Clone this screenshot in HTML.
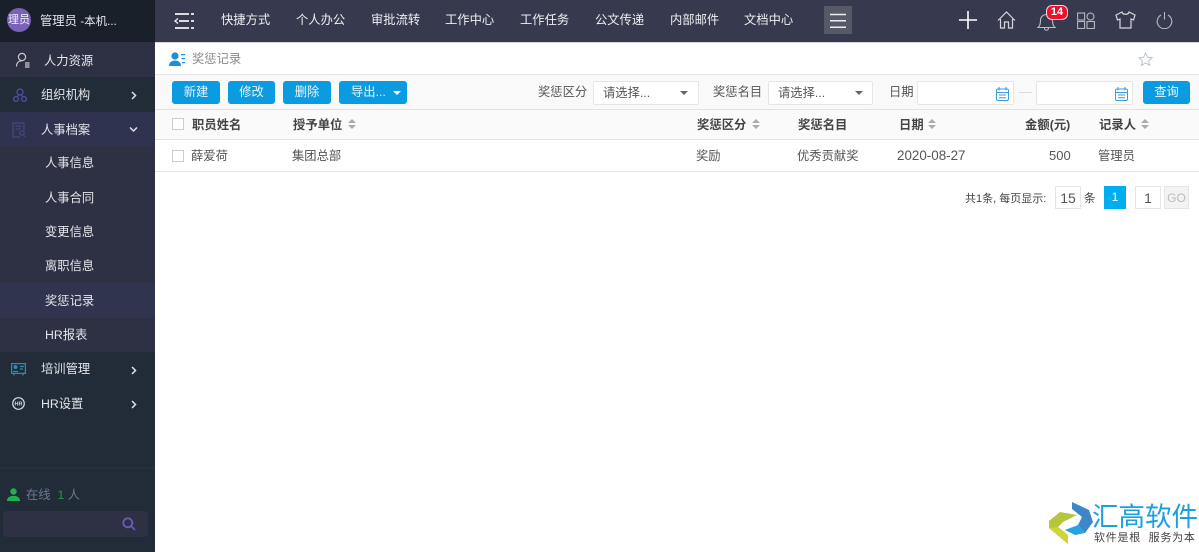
<!DOCTYPE html>
<html><head><meta charset="utf-8">
<style>
*{box-sizing:border-box;margin:0;padding:0}
html,body{width:1199px;height:552px;overflow:hidden;background:#fff}
body{position:relative;font-family:"Liberation Sans","Noto Sans CJK SC",sans-serif;font-size:12.3px;color:#444}
.a{position:absolute}
.t{position:absolute;white-space:nowrap;line-height:16px}
.side{color:#e3e6ea;font-size:12.3px}
.nav{color:#eef0f3;font-size:12.3px;top:12px}
.btn{position:absolute;top:81px;height:23px;background:#0a9be0;border-radius:3px;color:#eaf6fd;text-align:center;line-height:23px;font-size:12.3px}
.sel{position:absolute;top:81px;height:24px;background:#fff;border:1px solid #e6e6e6;border-radius:2px;color:#555;line-height:22px;padding-left:9px}
.th{font-weight:bold;color:#444;top:117px;letter-spacing:.05px}
.td{color:#555;top:148px}
.tri{position:absolute;width:0;height:0;border-left:4px solid transparent;border-right:4px solid transparent;border-top:4px solid #666}
.sort{position:absolute;top:119px;width:8px;height:12px}
.sort:before{content:"";position:absolute;left:0;top:0;border-left:4px solid transparent;border-right:4px solid transparent;border-bottom:4px solid #aaa}
.sort:after{content:"";position:absolute;left:0;top:6px;border-left:4px solid transparent;border-right:4px solid transparent;border-top:4px solid #aaa}
.cb{position:absolute;left:172px;width:12px;height:12px;border:1px solid #ccc;background:#fff}
.arr{position:absolute;left:130px}
</style></head><body>

<!-- sidebar -->
<div class="a" style="left:0;top:0;width:155px;height:552px;background:#222b38"></div>
<div class="a" style="left:0;top:0;width:155px;height:42px;background:#1a202a"></div>
<div class="a" style="left:0;top:42px;width:155px;height:35px;background:#2e3044"></div>
<div class="a" style="left:0;top:112px;width:155px;height:34px;background:#303350"></div>
<div class="a" style="left:0;top:146px;width:155px;height:206px;background:#2e3044"></div>
<div class="a" style="left:0;top:283px;width:155px;height:35px;background:#30344f"></div>
<div class="a" style="left:0;top:467px;width:155px;height:2px;background:#2a2f40"></div>

<div class="a" style="left:7px;top:8px;width:24px;height:24px;border-radius:50%;background:#7a62b8;color:#f2f0fa;font-size:11px;line-height:24px;text-align:center;white-space:nowrap">理员</div>
<div class="t side" style="left:40px;top:13px">管理员 <span style="font-size:11.5px">-本机...</span></div>

<svg class="a" style="left:15px;top:52px" width="16" height="17" viewBox="0 0 16 17" fill="none" stroke="#c9ccd2" stroke-width="1.2"><circle cx="7" cy="5" r="3.6"/><path d="M1.5 14.500c0-3.500 2-5.500 5-5.700M10 11h4.500M10 13h4.500M10 15h4.500"/></svg>
<div class="t side" style="left:44px;top:53px">人力资源</div>

<svg class="a" style="left:12px;top:87px" width="16" height="16" viewBox="0 0 16 16" fill="none" stroke="#4f4a9c" stroke-width="1.4"><circle cx="8" cy="5" r="3"/><circle cx="4" cy="12" r="2.400"/><circle cx="12" cy="12" r="2.400"/><path d="M6.500 8 5 10M9.500 8 11 10"/></svg>
<div class="t side" style="left:41px;top:87px">组织机构</div>
<svg class="arr" style="top:91px" width="8" height="9" viewBox="0 0 8 9" fill="none" stroke="#dfe2e6" stroke-width="1.500"><path d="M2 1l3.500 3.500L2 8"/></svg>

<svg class="a" style="left:12px;top:122px" width="14" height="16" viewBox="0 0 14 16" fill="none" stroke="#47457f" stroke-width="1.2"><path d="M12 8V1H1v14h7M3.500 4h6M3.500 7h5"/><circle cx="10" cy="11" r="2.200"/><path d="M11.500 13l1.500 2"/></svg>
<div class="t side" style="left:41px;top:122px">人事档案</div>
<svg class="arr" style="top:126px;left:129px" width="9" height="7" viewBox="0 0 9 7" fill="none" stroke="#dfe2e6" stroke-width="1.500"><path d="M1 1.500l3.500 3.500L8 1.500"/></svg>

<div class="t side" style="left:45px;top:155px">人事信息</div>
<div class="t side" style="left:45px;top:190px">人事合同</div>
<div class="t side" style="left:45px;top:224px">变更信息</div>
<div class="t side" style="left:45px;top:258px">离职信息</div>
<div class="t side" style="left:45px;top:293px">奖惩记录</div>
<div class="t side" style="left:45px;top:327px">HR报表</div>

<svg class="a" style="left:11px;top:363px" width="15" height="13" viewBox="0 0 15 13" fill="none" stroke="#2b8fb5" stroke-width="1.200"><rect x=".6" y=".6" width="13.800" height="9.800"/><circle cx="4.500" cy="4" r="1.400" fill="#2b8fb5"/><path d="M2 8.500h5M9 3.500h4M9 6h3M3 10.500v2M12 10.500v2"/></svg>
<div class="t side" style="left:41px;top:361px">培训管理</div>
<svg class="arr" style="top:366px" width="8" height="9" viewBox="0 0 8 9" fill="none" stroke="#dfe2e6" stroke-width="1.500"><path d="M2 1l3.500 3.500L2 8"/></svg>

<svg class="a" style="left:12px;top:397px" width="13" height="13" viewBox="0 0 13 13" fill="none"><circle cx="6.500" cy="6.500" r="5.800" stroke="#d8dbe0" stroke-width="1.200"/><text x="6.500" y="8.500" font-size="5.500" font-weight="bold" text-anchor="middle" fill="#d8dbe0" font-family="Liberation Sans,sans-serif">HR</text></svg>
<div class="t side" style="left:41px;top:396px">HR设置</div>
<svg class="arr" style="top:400px" width="8" height="9" viewBox="0 0 8 9" fill="none" stroke="#dfe2e6" stroke-width="1.500"><path d="M2 1l3.500 3.500L2 8"/></svg>

<svg class="a" style="left:7px;top:488px" width="13" height="13" viewBox="0 0 13 13" fill="#1fb14a"><circle cx="6.500" cy="3.500" r="3.200"/><path d="M0 13c0-3 2-4.500 4.500-5h4c2.500.5 4.500 2 4.500 5z"/></svg>
<div class="t" style="left:26px;top:487px;color:#6c7a8c">在线&nbsp; <span style="color:#1e9c42">1</span> 人</div>
<div class="a" style="left:3px;top:511px;width:145px;height:26px;background:#2e3044;border-radius:4px"></div>
<svg class="a" style="left:122px;top:517px" width="14" height="14" viewBox="0 0 14 14" fill="none" stroke="#6a5cb5" stroke-width="1.800"><circle cx="5.800" cy="5.800" r="4.500"/><path d="M9 9l4 4"/></svg>

<!-- top bar -->
<div class="a" style="left:155px;top:0;width:1044px;height:42px;background:#373a4f"></div>
<div class="a" style="left:155px;top:42px;width:1044px;height:1px;background:#d8d8dc"></div>
<svg class="a" style="left:173px;top:12px" width="22" height="18" viewBox="0 0 22 18" fill="none" stroke="#f2f3f5" stroke-width="1.800"><path d="M2 2h14M18 2h3M6 9h10M18 9h3M2 16h14M18 16h3"/><path d="M5 6.500 2 9l3 2.500" stroke-width="1.300"/></svg>

<div class="t nav" style="left:221px">快捷方式</div>
<div class="t nav" style="left:296px">个人办公</div>
<div class="t nav" style="left:371px">审批流转</div>
<div class="t nav" style="left:445px">工作中心</div>
<div class="t nav" style="left:520px">工作任务</div>
<div class="t nav" style="left:595px">公文传递</div>
<div class="t nav" style="left:670px">内部邮件</div>
<div class="t nav" style="left:744px">文档中心</div>

<div class="a" style="left:824px;top:6px;width:28px;height:28px;background:#565968"></div>
<svg class="a" style="left:829px;top:13px" width="18" height="16" viewBox="0 0 18 16" stroke="#eceef0" stroke-width="1.500"><path d="M1 1.500h16M1 7.800h16M1 14.200h16"/></svg>

<svg class="a" style="left:959px;top:11px" width="18" height="18" viewBox="0 0 18 18" stroke="#fff" stroke-width="1.600"><path d="M9 0v18M0 9h18"/></svg>
<svg class="a" style="left:997px;top:11px" width="19" height="18" viewBox="0 0 19 18" fill="none" stroke="#d5d7dc" stroke-width="1.200"><path d="M1 9.500 9.500 1 18 9.500M3.500 8v9h4v-6h4v6h4V8"/></svg>
<svg class="a" style="left:1037px;top:11px" width="19" height="20" viewBox="0 0 19 20" fill="none" stroke="#b9bcc4" stroke-width="1.100"><path d="M1 16.500c2-1.500 2.500-4 2.500-7 0-3.500 2.500-6 6-6s6 2.500 6 6c0 3 .5 5.500 2.500 7zM7.500 17c0 3 4 3 4 0"/></svg>
<div class="a" style="left:1046px;top:5px;width:22px;height:15px;background:#f0102c;border:1px solid #f3d5d8;border-radius:6px;color:#fff;font-size:11px;font-weight:bold;line-height:13px;text-align:center">14</div>
<svg class="a" style="left:1077px;top:12px" width="18" height="17" viewBox="0 0 18 17" fill="none" stroke="#b4b7bf" stroke-width="1.100"><rect x=".6" y="1" width="7" height="7"/><circle cx="13.500" cy="4.500" r="3.500"/><rect x=".6" y="9.500" width="7" height="7"/><rect x="10" y="9.500" width="7.400" height="7"/></svg>
<svg class="a" style="left:1115px;top:11px" width="21" height="18" viewBox="0 0 21 18" fill="none" stroke="#d5d7dc" stroke-width="1.200"><path d="M7 1 1 4l1.500 5L5 8v9h11V8l2.500 1L20 4l-6-3c-.5 3-6.500 3-7 0z"/></svg>
<svg class="a" style="left:1156px;top:12px" width="17" height="17" viewBox="0 0 17 17" fill="none" stroke="#b4b7bf" stroke-width="1.100"><path d="M5 3a7.300 7.300 0 1 0 7 0M8.500 0v7.500"/></svg>

<!-- breadcrumb -->
<svg class="a" style="left:169px;top:52px" width="16" height="14" viewBox="0 0 16 14" fill="#1d8fd8"><circle cx="6" cy="4" r="3.600"/><path d="M0 14c0-3.500 2.500-5.500 6-5.500S12 10.500 12 14z"/><path d="M12 2h4v1.200h-4zM12.500 6H16v1.200h-3.500zM13 10h3v1.200h-3z"/></svg>
<div class="t" style="left:192px;top:51px;color:#8a8a8a">奖惩记录</div>
<svg class="a" style="left:1138px;top:52px" width="15" height="15" viewBox="0 0 15 15" fill="none" stroke="#b9c2d0" stroke-width="1"><path d="M7.500 1l1.900 4.200 4.600.5-3.400 3.100.9 4.500-4-2.300-4 2.300.9-4.500L1 5.700l4.600-.5z"/></svg>

<!-- toolbar -->
<div class="a" style="left:155px;top:74px;width:1044px;height:36px;background:#f9f9f9;border-top:1px solid #e6e6e6;border-bottom:1px solid #e2e2e2"></div>
<div class="btn" style="left:172px;width:48px">新建</div>
<div class="btn" style="left:228px;width:47px">修改</div>
<div class="btn" style="left:283px;width:48px">删除</div>
<div class="btn" style="left:339px;width:68px;text-align:left;padding-left:12px">导出...</div>
<div class="tri" style="left:393px;top:91px;border-top-color:#fff"></div>

<div class="t" style="left:538px;top:84px;color:#555">奖惩区分</div>
<div class="sel" style="left:593px;width:106px">请选择...</div>
<div class="tri" style="left:680px;top:91px"></div>
<div class="t" style="left:713px;top:84px;color:#555">奖惩名目</div>
<div class="sel" style="left:768px;width:105px">请选择...</div>
<div class="tri" style="left:855px;top:91px"></div>
<div class="t" style="left:889px;top:84px;color:#555">日期</div>
<div class="sel" style="left:917px;width:97px"></div>
<svg class="a" style="left:996px;top:87px" width="13" height="14" viewBox="0 0 13 14" fill="none" stroke="#3d9ad8" stroke-width="1"><rect x=".5" y="2" width="12" height="11.500" rx="1.500"/><path d="M3 0v3.500M10 0v3.500M.5 5.500h12M3 8h7M3 10.800h7"/></svg>
<div class="a" style="left:1019px;top:92px;width:13px;height:1px;background:#ddd"></div>
<div class="sel" style="left:1036px;width:97px"></div>
<svg class="a" style="left:1115px;top:87px" width="13" height="14" viewBox="0 0 13 14" fill="none" stroke="#3d9ad8" stroke-width="1"><rect x=".5" y="2" width="12" height="11.500" rx="1.500"/><path d="M3 0v3.500M10 0v3.500M.5 5.500h12M3 8h7M3 10.800h7"/></svg>
<div class="btn" style="left:1143px;width:47px">查询</div>

<!-- table -->
<div class="a" style="left:155px;top:110px;width:1044px;height:30px;background:#fafafa;border-bottom:1px solid #e2e2e2"></div>
<div class="a" style="left:155px;top:171px;width:1044px;height:1px;background:#e6e6e6"></div>
<div class="cb" style="top:118px"></div>
<div class="cb" style="top:150px"></div>
<div class="t th" style="left:192px">职员姓名</div>
<div class="t th" style="left:293px">授予单位</div><div class="sort" style="left:348px"></div>
<div class="t th" style="left:697px">奖惩区分</div><div class="sort" style="left:752px"></div>
<div class="t th" style="left:798px">奖惩名目</div>
<div class="t th" style="left:899px">日期</div><div class="sort" style="left:928px"></div>
<div class="t th" style="left:1025px">金额(元)</div>
<div class="t th" style="left:1099px">记录人</div><div class="sort" style="left:1141px"></div>

<div class="t td" style="left:191px">薛爱荷</div>
<div class="t td" style="left:292px">集团总部</div>
<div class="t td" style="left:696px">奖励</div>
<div class="t td" style="left:797px">优秀贡献奖</div>
<div class="t td" style="left:897px;font-size:13.4px">2020-08-27</div>
<div class="t td" style="left:1049px;font-size:13px">500</div>
<div class="t td" style="left:1098px">管理员</div>

<!-- pagination -->
<div class="t" style="left:965px;top:191px;font-size:11px;color:#444">共1条, 每页显示:</div>
<div class="a" style="left:1055px;top:186px;width:26px;height:23px;border:1px solid #e6e6e6;text-align:center;line-height:22px;color:#555;font-size:14px">15</div>
<div class="t" style="left:1084px;top:191px;font-size:11.5px;color:#444">条</div>
<div class="a" style="left:1104px;top:186px;width:22px;height:23px;background:#00aeef;color:#fff;text-align:center;line-height:23px">1</div>
<div class="a" style="left:1135px;top:186px;width:26px;height:23px;border:1px solid #e6e6e6;text-align:center;line-height:22px;color:#555;font-size:14px">1</div>
<div class="a" style="left:1164px;top:186px;width:25px;height:23px;background:#f3f3f3;border:1px solid #e6e6e6;text-align:center;line-height:22px;color:#bbb;font-size:12px">GO</div>

<!-- watermark -->
<svg class="a" style="left:1048px;top:501px" width="46" height="44" viewBox="0 0 46 44">
<polygon points="1,20 12,11 29,14 15,21 10,26 20,34 20,43 1,27" fill="#b6c63a"/>
<polygon points="1,27 10,26 20,34 20,43" fill="#cdd636"/>
<polygon points="17,29 30,24 37,32 27,34" fill="#27a3e0"/>
<polygon points="24,1 41,9 45,21 37,32 30,24 34,16 24,8" fill="#3f86c8"/>
</svg>
<div class="t" style="left:1092px;top:502px;font-size:26.5px;line-height:30px;color:#1aa0e0;letter-spacing:0;font-weight:400">汇高软件</div>
<div class="t" style="left:1094px;top:531px;font-size:11px;line-height:14px;color:#444;letter-spacing:.75px">软件是根&nbsp; 服务为本</div>

</body></html>
